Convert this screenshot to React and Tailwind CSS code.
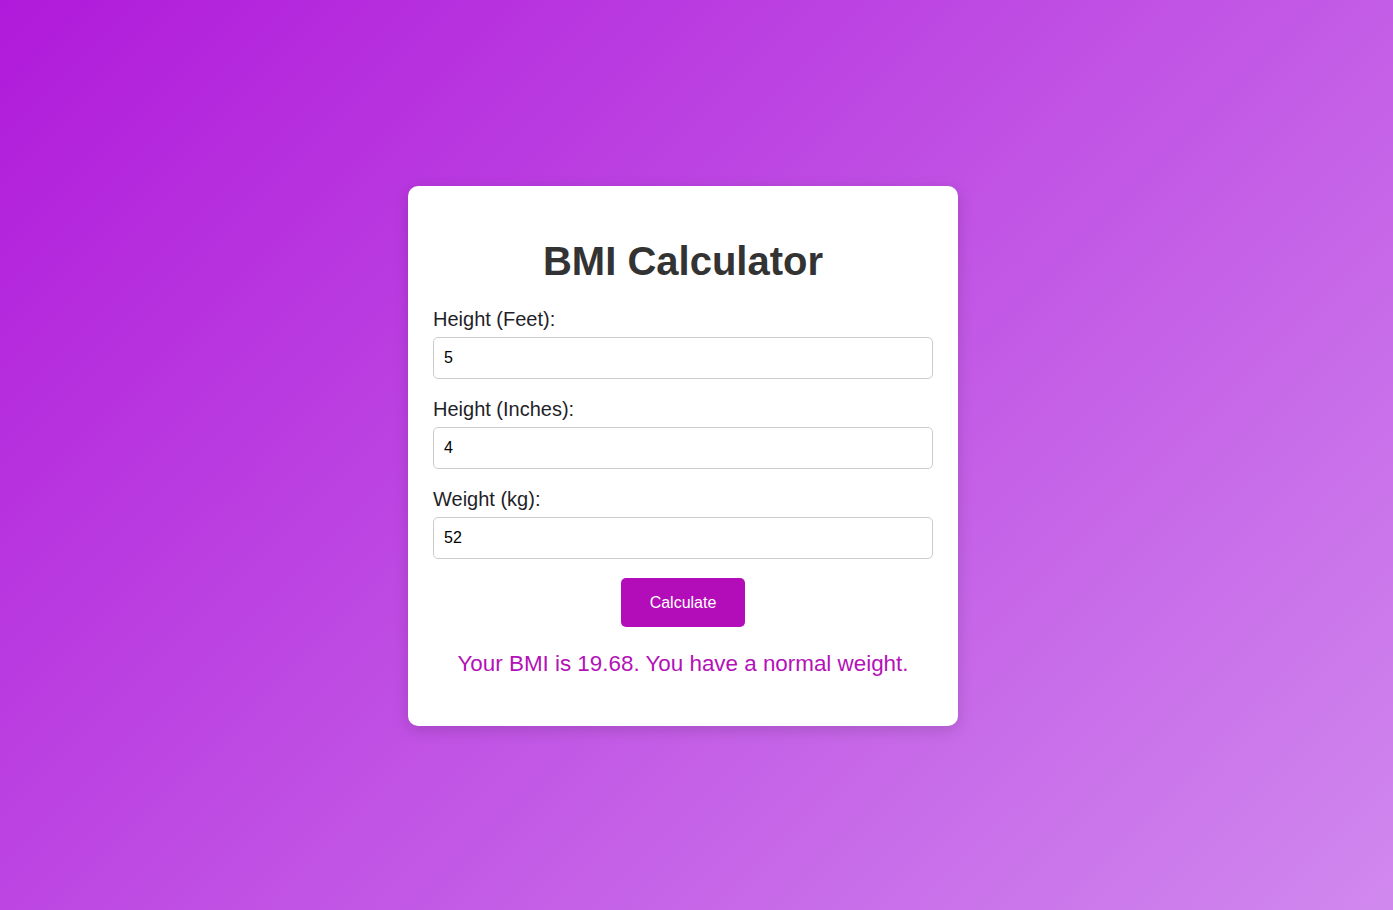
import React from "react";

export default function App() {
  return (
    <div
      className="min-h-screen w-full flex items-center justify-center pr-[27px] pt-[2px] bg-[linear-gradient(135deg,#b01ada_0%,#d088ee_100%)]"
      style={{ fontFamily: '"Liberation Sans", Arial, sans-serif' }}
    >
      <div className="w-[550px] bg-white rounded-[10px] px-[25px] pt-[25px] pb-[25px] shadow-[0_4px_15px_rgba(0,0,0,0.15)] flex flex-col">
        <h1 className="text-[40px] leading-[46px] font-bold text-[#333333] text-center mt-[27px] mb-[25px]">
          BMI Calculator
        </h1>
        <label className="text-[20px] leading-[21px] text-[#1f1f2a] mb-[7px]">Height (Feet):</label>
        <input
          readOnly
          value="5"
          className="h-[42px] w-full border border-[#cccccc] rounded-[5px] px-[10px] text-[16px] text-black mb-[20px] outline-none"
        />
        <label className="text-[20px] leading-[21px] text-[#1f1f2a] mb-[7px]">Height (Inches):</label>
        <input
          readOnly
          value="4"
          className="h-[42px] w-full border border-[#cccccc] rounded-[5px] px-[10px] text-[16px] text-black mb-[20px] outline-none"
        />
        <label className="text-[20px] leading-[21px] text-[#1f1f2a] mb-[7px]">Weight (kg):</label>
        <input
          readOnly
          value="52"
          className="h-[42px] w-full border border-[#cccccc] rounded-[5px] px-[10px] text-[16px] text-black mb-[19px] outline-none"
        />
        <div className="flex justify-center">
          <button className="w-[124px] h-[49px] bg-[#b30db9] text-white text-[16px] rounded-[5px]">
            Calculate
          </button>
        </div>
        <p className="text-center text-[22.4px] leading-[26px] text-[#b312b8] mt-[24px] mb-[24px]">
          Your BMI is 19.68. You have a normal weight.
        </p>
      </div>
    </div>
  );
}
